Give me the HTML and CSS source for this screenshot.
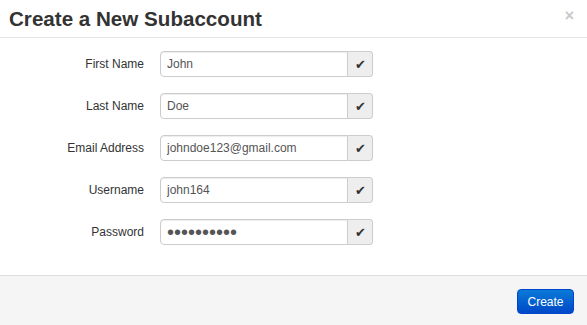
FILE: index.html
```html
<!DOCTYPE html>
<html lang="en">
<head>
    <meta charset="UTF-8">
    <title>Create a New Subaccount</title>
    <link rel="stylesheet" href="styles.css">
</head>
<body>
    <div class="modal">
        <div class="modal-header">
            <h3>Create a New Subaccount</h3>
            <span class="close">&times;</span>
        </div>

        <div class="modal-body">
            <div class="form-row">
                <label for="first-name">First Name</label>
                <div class="input-append">
                    <input type="text" id="first-name" value="John">
                    <span class="add-on">&#10004;</span>
                </div>
            </div>

            <div class="form-row">
                <label for="last-name">Last Name</label>
                <div class="input-append">
                    <input type="text" id="last-name" value="Doe">
                    <span class="add-on">&#10004;</span>
                </div>
            </div>

            <div class="form-row">
                <label for="email">Email Address</label>
                <div class="input-append">
                    <input type="text" id="email" value="johndoe123@gmail.com">
                    <span class="add-on">&#10004;</span>
                </div>
            </div>

            <div class="form-row">
                <label for="username">Username</label>
                <div class="input-append">
                    <input type="text" id="username" value="john164">
                    <span class="add-on">&#10004;</span>
                </div>
            </div>

            <div class="form-row">
                <label for="password">Password</label>
                <div class="input-append">
                    <input type="password" id="password" class="password" value="secretpass">
                    <span class="add-on">&#10004;</span>
                </div>
            </div>
        </div>

        <div class="modal-footer">
            <button class="btn-primary">Create</button>
        </div>
    </div>
</body>
</html>
```

FILE: styles.css
```css
:root {
    --text-color: #333;
    --input-color: #555;
    --border-color: #ccc;
    --footer-bg: #f5f5f5;
}

body {
    margin: 0;
    font-family: "Liberation Sans", Arial, sans-serif;
    font-size: 12px;
    color: var(--text-color);
    background: white;
}

.modal {
    width: 587px;
    height: 325px;
    display: flex;
    flex-direction: column;
}

.modal-header {
    height: 37px;
    border-bottom: 1px solid #e5e5e5;
    padding: 0 9px;
    display: flex;
    align-items: center;
    justify-content: space-between;
}

.modal-header h3 {
    margin: 0;
    font-size: 20.6px;
    font-weight: bold;
    color: var(--text-color);
}

.close {
    font-size: 16px;
    font-weight: bold;
    color: #c8c8c8;
    margin-right: 4px;
    margin-top: -6px;
}

.modal-body {
    flex: 1;
    padding-top: 13px;
    display: flex;
    flex-direction: column;
    gap: 16px;
}

.form-row {
    display: grid;
    grid-template-columns: 144px 213px;
    column-gap: 16px;
    align-items: center;
}

.form-row label {
    text-align: right;
}

.input-append {
    display: flex;
    height: 26px;
}

.input-append input {
    flex: 1;
    min-width: 0;
    box-sizing: border-box;
    height: 26px;
    margin: 0;
    padding: 4px 6px;
    border: 1px solid var(--border-color);
    border-radius: 4px 0 0 4px;
    font-family: inherit;
    font-size: 12px;
    color: var(--input-color);
    box-shadow: inset 0 1px 1px rgba(0, 0, 0, 0.075);
}

.input-append input.password {
    font-size: 20px;
    padding: 0 6px;
}

.add-on {
    box-sizing: border-box;
    width: 25px;
    height: 26px;
    display: flex;
    align-items: center;
    justify-content: center;
    background: #eee;
    border: 1px solid var(--border-color);
    border-left: none;
    border-radius: 0 4px 4px 0;
    font-size: 13px;
    color: #333;
}

.modal-footer {
    height: 49px;
    border-top: 1px solid #ddd;
    background: var(--footer-bg);
    display: flex;
    align-items: center;
    justify-content: flex-end;
    padding: 0 13px;
}

.btn-primary {
    width: 57px;
    height: 25px;
    margin-top: 2px;
    border: 1px solid #0044cc;
    border-radius: 4px;
    background: linear-gradient(#0a7ad8, #0048c8);
    color: white;
    font-family: inherit;
    font-size: 12px;
    cursor: pointer;
}
```
